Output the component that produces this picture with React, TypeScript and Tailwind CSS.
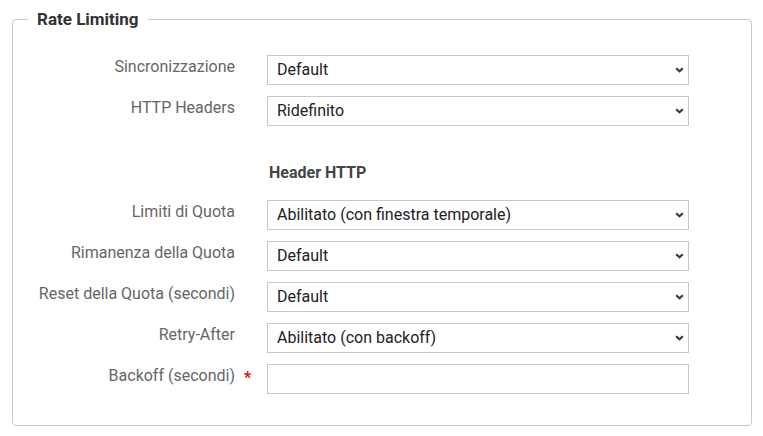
import React from 'react';

const Chevron = () => (
  <svg className="pointer-events-none absolute right-[5px] top-1/2 -translate-y-1/2" width="9" height="6" viewBox="0 0 9 6">
    <path d="M1.2 1.2 L4.5 4.3 L7.8 1.2" fill="none" stroke="#3a3a40" strokeWidth="2.2" />
  </svg>
);

interface RowProps {
  label: string;
  value?: string;
  required?: boolean;
  input?: boolean;
}

const Row: React.FC<RowProps> = ({ label, value, required, input }) => (
  <div className="flex items-start">
    <label className="w-[222px] pt-[2px] text-right text-[16px] leading-5 text-[#666]">{label}</label>
    <div className="w-[32px] pl-[9px] pt-[4px] text-[16px] leading-5 font-bold text-[#e00]">{required ? '*' : ''}</div>
    {input ? (
      <input className="h-[30px] w-[422px] border border-[#c8c8c8] bg-white px-[9px] text-[16px] text-[#333] outline-none" />
    ) : (
      <div className="relative h-[30px] w-[422px]">
        <select
          defaultValue={value}
          className="h-full w-full appearance-none border border-[#c8c8c8] bg-white pl-[9px] pr-6 text-[16px] text-[#222]"
        >
          <option>{value}</option>
        </select>
        <Chevron />
      </div>
    )}
  </div>
);

export default function App() {
  return (
    <div className="h-[436px] w-[763px] bg-white pt-[9px]" style={{ fontFamily: 'Roboto, "Liberation Sans", sans-serif' }}>
      <fieldset className="ml-[12px] w-[740px] rounded-[4px] border border-[#c8c8c8] px-0 pt-[26px] pb-[31px]">
        <legend className="ml-[15px] px-[9px] text-[17px] font-bold leading-5 text-[#333]">Rate Limiting</legend>
        <div className="flex flex-col gap-[11px]">
          <Row label="Sincronizzazione" value="Default" />
          <Row label="HTTP Headers" value="Ridefinito" />
        </div>
        <div className="pl-[256px] pt-[37px] pb-[17px] text-[16px] font-bold leading-5 text-[#444]">Header HTTP</div>
        <div className="flex flex-col gap-[11px]">
          <Row label="Limiti di Quota" value="Abilitato (con finestra temporale)" />
          <Row label="Rimanenza della Quota" value="Default" />
          <Row label="Reset della Quota (secondi)" value="Default" />
          <Row label="Retry-After" value="Abilitato (con backoff)" />
          <Row label="Backoff (secondi)" required input />
        </div>
      </fieldset>
    </div>
  );
}
